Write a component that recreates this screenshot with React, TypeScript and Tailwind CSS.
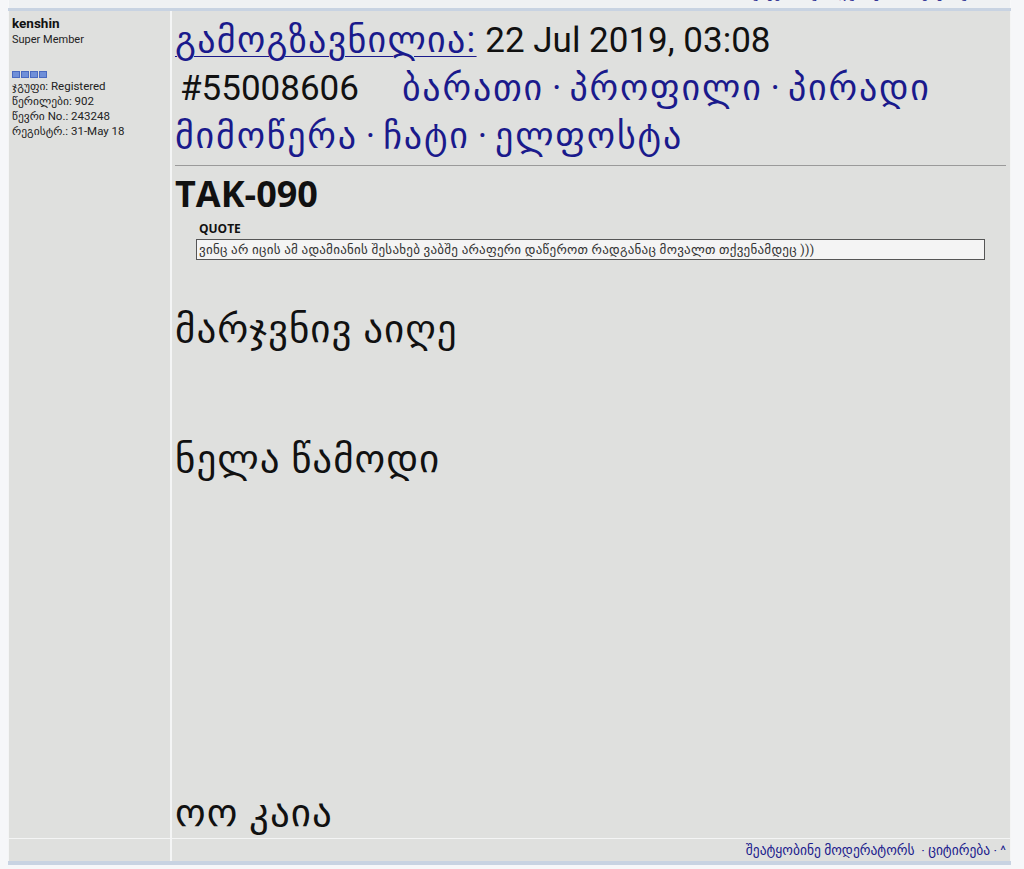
import React from "react";

const Dot = () => <span className="mx-[8px] tracking-normal">·</span>;

export default function App() {
  return (
    <div className="min-h-[869px] bg-[#f6f7f9] pl-[8px] pr-[13px] font-['Roboto','DejaVu_Sans',sans-serif]">
      {/* previous post footer, mostly cut off */}
      <div className="h-[8px] overflow-hidden bg-[#eff1f3] border-x border-[#f8f9fa]">
        <div className="-mt-[14px] flex justify-end pr-[14px] text-[13px] leading-[16px] text-[#1a1a8c]">
          შეატყობინე მოდერატორს&nbsp; · ციტირება · ^
        </div>
      </div>
      <div className="h-[3px] bg-[#c8d3e2]" />
      <div className="grid grid-cols-[161px_1fr] gap-x-[2px] gap-y-[1px] bg-[#f4f5f5] border-x border-[#f4f5f5]">
        {/* left user info */}
        <div className="bg-[#dfe0de] px-[3px] pt-[3px] text-[11.5px] leading-[15px] text-[#222]">
          <div className="text-[13.5px] leading-[18px] font-bold text-[#111]">kenshin</div>
          <div className="text-[11px] leading-[15px]">Super Member</div>
          <div className="mt-[24px] flex gap-[1px] h-[8px]">
            <span className="w-[8px] h-[7px] bg-[#6f8fd8] border border-[#4a6ac0]" />
            <span className="w-[8px] h-[7px] bg-[#6f8fd8] border border-[#4a6ac0]" />
            <span className="w-[8px] h-[7px] bg-[#6f8fd8] border border-[#4a6ac0]" />
            <span className="w-[8px] h-[7px] bg-[#6f8fd8] border border-[#4a6ac0]" />
          </div>
          <div>ჯგუფი: Registered</div>
          <div>წერილები: 902</div>
          <div>წევრი No.: 243248</div>
          <div>რეგისტრ.: 31-May 18</div>
        </div>
        {/* right post */}
        <div className="bg-[#dfe0de] pl-[3px] pr-[4px] pt-[6px]">
          <div className="text-[35px] leading-[48px] text-[#111] pb-[4px] border-b border-[#9a9a9a]">
            <span className="text-[36px] leading-[36px] tracking-[1.3px] text-[#1a1a8c] underline decoration-1 underline-offset-4">გამოგზავნილია:</span> 22 Jul 2019, 03:08
            <br />
            <span className="ml-[5px]">#55008606</span>
            <span className="ml-[43px] text-[36px] leading-[36px] tracking-[1.8px] text-[#1a1a8c]">
              ბარათი<Dot />პროფილი<Dot />პირადი მიმოწერა<Dot />ჩატი<Dot />ელფოსტა
            </span>
          </div>
          <div className="pt-[6px] text-[#111]">
            <div className="font-['Open_Sans',sans-serif] font-bold text-[36px] leading-[44px]">TAK-090</div>
            <div className="ml-[21px] mr-[21px] mt-[6px]">
              <div className="font-['Open_Sans',sans-serif] font-bold text-[12px] leading-[14px] ml-[3px]">QUOTE</div>
              <div className="mt-[3px] border border-[#555] bg-[#f4f4f4] px-[2px] text-[13px] tracking-[0.25px] leading-[19px] text-[#333]">
                ვინც არ იცის ამ ადამიანის შესახებ ვაბშე არაფერი დაწეროთ რადგანაც მოვალთ თქვენამდეც )))
              </div>
            </div>
            <div className="mt-[47px] text-[39px] tracking-[1px] leading-[44px]">
              <div>მარჯვნივ აიღე</div>
              <div className="h-[86px]" />
              <div>ნელა წამოდი</div>
              <div className="h-[310px]" />
              <div className="pb-[3px]">ოო კაია</div>
            </div>
          </div>
        </div>
        {/* footer row */}
        <div className="bg-[#dfe0de] h-[22px]" />
        <div className="bg-[#dfe0de] h-[22px] flex items-center justify-end pr-[4px] text-[13.5px] text-[#1a1a8c]">
          შეატყობინე მოდერატორს&nbsp; · ციტირება · ^
        </div>
      </div>
      <div className="h-[4px] bg-[#c8d3e2]" />
    </div>
  );
}
